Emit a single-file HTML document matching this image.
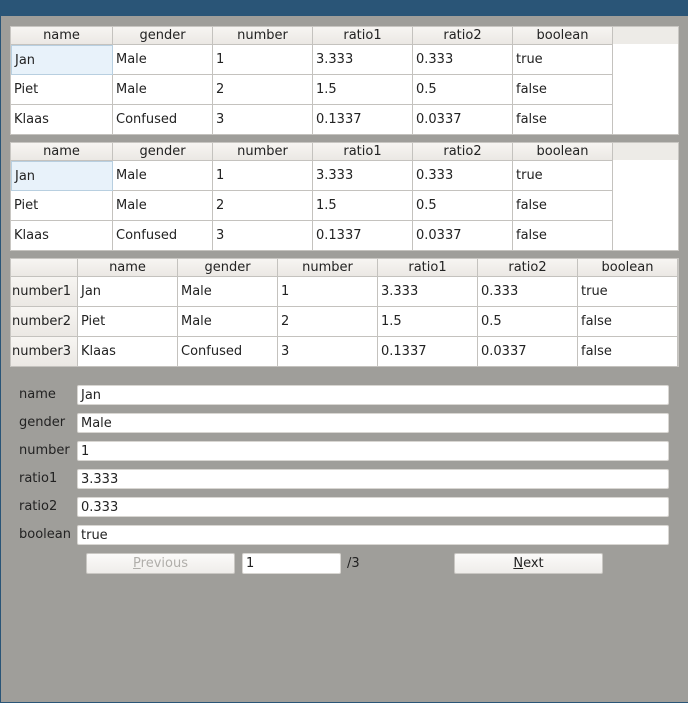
<!DOCTYPE html><html><head><style>
body{margin:0;width:688px;height:703px;background:#2a5577;font-family:"DejaVu Sans",sans-serif;font-size:13px;color:#222;position:relative;overflow:hidden}
.win{position:absolute;left:1px;top:16px;width:687px;height:686px;background:#9f9e9a}
.tbl{position:absolute;left:10px;width:669px;height:109px;background:#fff;border:1px solid #c8c6c2;box-sizing:border-box}
.c{position:absolute;box-sizing:border-box;border-right:1px solid #c4c2be;border-bottom:1px solid #c4c2be;background:#fff;padding-left:3px;line-height:29px;white-space:nowrap}
.h{position:absolute;box-sizing:border-box;border-right:1px solid #c4c2be;border-bottom:1px solid #c4c2be;background:linear-gradient(#f7f5f2,#ebe8e4);text-align:center;line-height:17px;height:18px}
.lab{position:absolute;left:19px}
.fld{position:absolute;left:77px;width:592px;height:20px;background:#fff;border:1px solid #d8d6d2;box-sizing:border-box;border-radius:2px;padding-left:3px;line-height:19px}
.btn{position:absolute;height:21px;top:553px;box-sizing:border-box;border:1px solid #c9c7c3;border-radius:2px;background:linear-gradient(#fbfaf9,#efedea);text-align:center;line-height:19px}
</style></head><body>
<div class="win"></div>
<div id="t"></div>
<div class="lab" style="top:387px">name</div><div class="fld" style="top:385px">Jan</div>
<div class="lab" style="top:415px">gender</div><div class="fld" style="top:413px">Male</div>
<div class="lab" style="top:443px">number</div><div class="fld" style="top:441px">1</div>
<div class="lab" style="top:471px">ratio1</div><div class="fld" style="top:469px">3.333</div>
<div class="lab" style="top:499px">ratio2</div><div class="fld" style="top:497px">0.333</div>
<div class="lab" style="top:527px">boolean</div><div class="fld" style="top:525px">true</div>
<div class="btn" style="left:86px;width:149px;color:#b0aeaa"><u>P</u>revious</div>
<div class="fld" style="left:242px;width:99px;top:553px;height:21px">1</div>
<div style="position:absolute;left:347px;top:556px">/3</div>
<div class="btn" style="left:454px;width:149px"><u>N</u>ext</div>
<script>
var cols=["name","gender","number","ratio1","ratio2","boolean"];
var rows=[["Jan","Male","1","3.333","0.333","true"],["Piet","Male","2","1.5","0.5","false"],["Klaas","Confused","3","0.1337","0.0337","false"]];
var h="";
function tbl(top,rh){
 h+='<div class="tbl" style="top:'+top+'px"></div>';
 var x0=rh?78:13, y=top+1;
 if(rh) h+='<div class="h" style="left:11px;top:'+y+'px;width:67px"></div>';
 else h+='<div style="position:absolute;background:#edebe7;left:613px;top:'+y+'px;width:65px;height:17px"></div>';
 for(var i=0;i<6;i++){var l=x0+i*100,w=100;if(i==0&&!rh){l=11;w=102;}
  h+='<div class="h" style="left:'+l+'px;top:'+y+'px;width:'+w+'px">'+cols[i]+'</div>';}
 for(var r=0;r<3;r++){var yy=y+18+r*30;
  if(rh) h+='<div class="h" style="left:11px;top:'+yy+'px;width:67px;height:30px;line-height:29px;text-align:left;padding-left:1px">number'+(r+1)+'</div>';
  for(var i=0;i<6;i++){var l=x0+i*100,w=100;if(i==0&&!rh){l=11;w=102;}
   var st='left:'+l+'px;top:'+yy+'px;width:'+w+'px;height:30px';
   if(!rh&&r==0&&i==0) st+=';background:#e8f2fa;border:1px solid #b8cfe0';
   h+='<div class="c" style="'+st+'">'+rows[r][i]+'</div>';}}
}
tbl(26,false);tbl(142,false);tbl(258,true);
document.getElementById("t").innerHTML=h;
</script>
</body></html>
